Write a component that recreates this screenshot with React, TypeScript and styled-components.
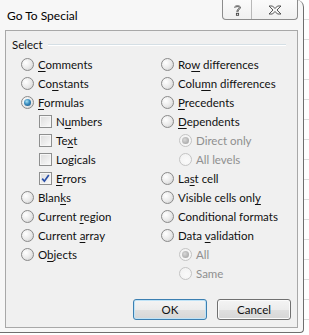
import React from 'react';
import styled, { createGlobalStyle, css } from 'styled-components';

const GlobalStyle = createGlobalStyle`
  html, body {
    margin: 0;
    padding: 0;
  }
  body {
    width: 309px;
    height: 335px;
    overflow: hidden;
    font-family: Lato, "Liberation Sans", sans-serif;
    font-size: 11.5px;
    color: #111;
    background-color: #fff;
    background-image: repeating-linear-gradient(
      to bottom,
      transparent 0,
      transparent 19px,
      #dcdcdc 19px,
      #dcdcdc 20px
    );
  }
`;

type Item = { label: string; key?: number; kind: 'radio' | 'check'; checked?: boolean; disabled?: boolean; sub?: boolean };

const leftItems: Item[] = [
  { label: 'Comments', key: 0, kind: 'radio' },
  { label: 'Constants', key: 2, kind: 'radio' },
  { label: 'Formulas', key: 0, kind: 'radio', checked: true },
  { label: 'Numbers', key: 1, kind: 'check', sub: true },
  { label: 'Text', key: 2, kind: 'check', sub: true },
  { label: 'Logicals', kind: 'check', sub: true },
  { label: 'Errors', key: 0, kind: 'check', sub: true, checked: true },
  { label: 'Blanks', key: 4, kind: 'radio' },
  { label: 'Current region', key: 8, kind: 'radio' },
  { label: 'Current array', key: 8, kind: 'radio' },
  { label: 'Objects', key: 1, kind: 'radio' },
];

const rightItems: Item[] = [
  { label: 'Row differences', key: 2, kind: 'radio' },
  { label: 'Column differences', key: 4, kind: 'radio' },
  { label: 'Precedents', key: 0, kind: 'radio' },
  { label: 'Dependents', key: 0, kind: 'radio' },
  { label: 'Direct only', kind: 'radio', sub: true, checked: true, disabled: true },
  { label: 'All levels', kind: 'radio', sub: true, disabled: true },
  { label: 'Last cell', key: 2, kind: 'radio' },
  { label: 'Visible cells only', key: 17, kind: 'radio' },
  { label: 'Conditional formats', key: 6, kind: 'radio' },
  { label: 'Data validation', key: 5, kind: 'radio' },
  { label: 'All', kind: 'radio', sub: true, checked: true, disabled: true },
  { label: 'Same', kind: 'radio', sub: true, disabled: true },
];

const Label = ({ text, at }: { text: string; at?: number }) => {
  if (at === undefined) return <>{text}</>;
  return (
    <>
      {text.slice(0, at)}
      <u>{text[at]}</u>
      {text.slice(at + 1)}
    </>
  );
};

const App: React.FC = () => {
  const renderItem = (it: Item) => (
    <Row key={it.label} $sub={it.sub} $disabled={it.disabled}>
      {it.kind === 'radio' ? (
        <Radio $disabled={it.disabled}>{it.checked && <Dot $disabled={it.disabled} />}</Radio>
      ) : (
        <Check>
          {it.checked && (
            <svg width="9" height="9" viewBox="0 0 9 9">
              <path d="M1.2 4.6 L3.4 7.2 L7.8 1" fill="none" stroke="#2a4fa8" strokeWidth="1.7" />
            </svg>
          )}
        </Check>
      )}
      <span>
        <Label text={it.label} at={it.key} />
      </span>
    </Row>
  );

  return (
    <React.Fragment>
      <GlobalStyle />
      <Window>
        <TitleBar>
          <Title>Go To Special</Title>
          <Caption>
            <CapButton $w={29}>
              <svg width="9" height="12" viewBox="0 0 9 12">
                <path
                  d="M1.5 3.5 C1.5 1.2 7.5 1.2 7.5 3.5 C7.5 5.3 5 5.4 5 7.4 L5 8 M4 8 L4 7.2 C4 5 6.3 5 6.3 3.5 C6.3 2.3 2.8 2.3 2.6 3.6"
                  fill="none"
                  stroke="#444"
                  strokeWidth="0.9"
                />
                <rect x="3.4" y="9.3" width="2.2" height="2" fill="none" stroke="#444" strokeWidth="0.9" />
              </svg>
            </CapButton>
            <CapButton $w={46} $last>
              <svg width="14" height="10" viewBox="0 0 14 10">
                <path
                  d="M1 1 L4.5 1 L7 3.5 L9.5 1 L13 1 L9 5 L13 9 L9.5 9 L7 6.5 L4.5 9 L1 9 L5 5 Z"
                  fill="none"
                  stroke="#444"
                  strokeWidth="0.9"
                />
              </svg>
            </CapButton>
          </Caption>
        </TitleBar>
        <Panel>
          <GroupHead>
            <span>Select</span>
            <Rule />
          </GroupHead>
          <Columns>
            <Column>{leftItems.map(renderItem)}</Column>
            <Column>{rightItems.map(renderItem)}</Column>
          </Columns>
          <Buttons>
            <Button $default>OK</Button>
            <Button>Cancel</Button>
          </Buttons>
        </Panel>
      </Window>
    </React.Fragment>
  );
};

const Window = styled.div`
  width: 303px;
  height: 332px;
  background: #f7f7f7;
  border-right: 1px solid #6f6f6f;
  border-bottom: 1px solid #6f6f6f;
  border-top-right-radius: 7px;
  border-bottom-right-radius: 4px;
  display: flex;
  flex-direction: column;
`;

const TitleBar = styled.div`
  height: 30px;
  display: flex;
  align-items: flex-start;
  justify-content: space-between;
  padding-left: 7px;
  padding-right: 5px;
`;

const Title = styled.div`
  margin-top: 8px;
  font-size: 12px;
  color: #000;
`;

const Caption = styled.div`
  display: flex;
  height: 19px;
  border: 1px solid #8c8c8c;
  border-top: none;
  border-radius: 0 0 4px 4px;
  background: linear-gradient(to bottom, #fbfbfb, #f0f0f0);
  overflow: hidden;
`;

const CapButton = styled.div<{ $w: number; $last?: boolean }>`
  width: ${(p) => p.$w - 1}px;
  display: flex;
  align-items: center;
  justify-content: center;
  ${(p) =>
    !p.$last &&
    css`
      border-right: 1px solid #b8b8b8;
    `}
`;

const Panel = styled.div`
  margin: 0 5px 4px 5px;
  height: 298px;
  box-sizing: border-box;
  border: 1px solid #a8a8a8;
  background: #f0f0f0;
  display: flex;
  flex-direction: column;
  padding: 6px 6px 7px 6px;
`;

const GroupHead = styled.div`
  display: flex;
  align-items: center;
  gap: 5px;
  height: 15px;
  line-height: 15px;
`;

const Rule = styled.div`
  flex: 1;
  height: 0;
  border-top: 1px solid #d5dfe5;
  border-bottom: 1px solid #fff;
  margin-right: 5px;
`;

const Columns = styled.div`
  display: grid;
  grid-template-columns: 140px 1fr;
  padding-left: 9px;
  margin-top: 3px;
`;

const Column = styled.div`
  display: flex;
  flex-direction: column;
`;

const Row = styled.div<{ $sub?: boolean; $disabled?: boolean }>`
  height: 19px;
  display: flex;
  align-items: center;
  gap: 4px;
  padding-left: ${(p) => (p.$sub ? 18 : 0)}px;
  color: ${(p) => (p.$disabled ? '#8f8f8f' : '#111')};
  white-space: nowrap;
  u {
    text-decoration-thickness: 1px;
    text-underline-offset: 2px;
  }
`;

const Radio = styled.div<{ $disabled?: boolean }>`
  width: 13px;
  height: 13px;
  box-sizing: border-box;
  border-radius: 50%;
  border: 1px solid ${(p) => (p.$disabled ? '#c4c4c4' : '#8a8a8a')};
  background: ${(p) =>
    p.$disabled
      ? 'radial-gradient(circle at 60% 60%, #fafafa 0%, #f0f0f0 100%)'
      : 'radial-gradient(circle at 35% 35%, #ffffff 0%, #e8e8e8 55%, #c9c9c9 100%)'};
  display: flex;
  align-items: center;
  justify-content: center;
  flex-shrink: 0;
`;

const Dot = styled.div<{ $disabled?: boolean }>`
  width: 7px;
  height: 7px;
  border-radius: 50%;
  background: ${(p) =>
    p.$disabled
      ? 'radial-gradient(circle at 40% 40%, #d8d8d8, #9a9a9a)'
      : 'radial-gradient(circle at 40% 35%, #a9e3f5 0%, #3a8dc0 45%, #164a78 100%)'};
`;

const Check = styled.div`
  width: 13px;
  height: 13px;
  box-sizing: border-box;
  border: 1px solid #8e8f8f;
  background: linear-gradient(135deg, #dcdcdc 0%, #eeeeee 60%, #fbfbfb 100%);
  box-shadow: inset 0 0 0 1px #f6f6f6;
  display: flex;
  align-items: center;
  justify-content: center;
  flex-shrink: 0;
`;

const Buttons = styled.div`
  margin-top: auto;
  display: flex;
  justify-content: flex-end;
  gap: 10px;
`;

const Button = styled.div<{ $default?: boolean }>`
  width: 74px;
  height: 21px;
  box-sizing: border-box;
  border-radius: 3px;
  border: 1px solid ${(p) => (p.$default ? '#3c7fb1' : '#707070')};
  background: linear-gradient(to bottom, #f4f4f4 0%, #ececec 50%, #e0e0e0 51%, #d6d6d6 100%);
  box-shadow: inset 0 0 0 1px ${(p) => (p.$default ? '#bfe3f7' : '#fbfbfb')};
  display: flex;
  align-items: center;
  justify-content: center;
`;

export default App;
